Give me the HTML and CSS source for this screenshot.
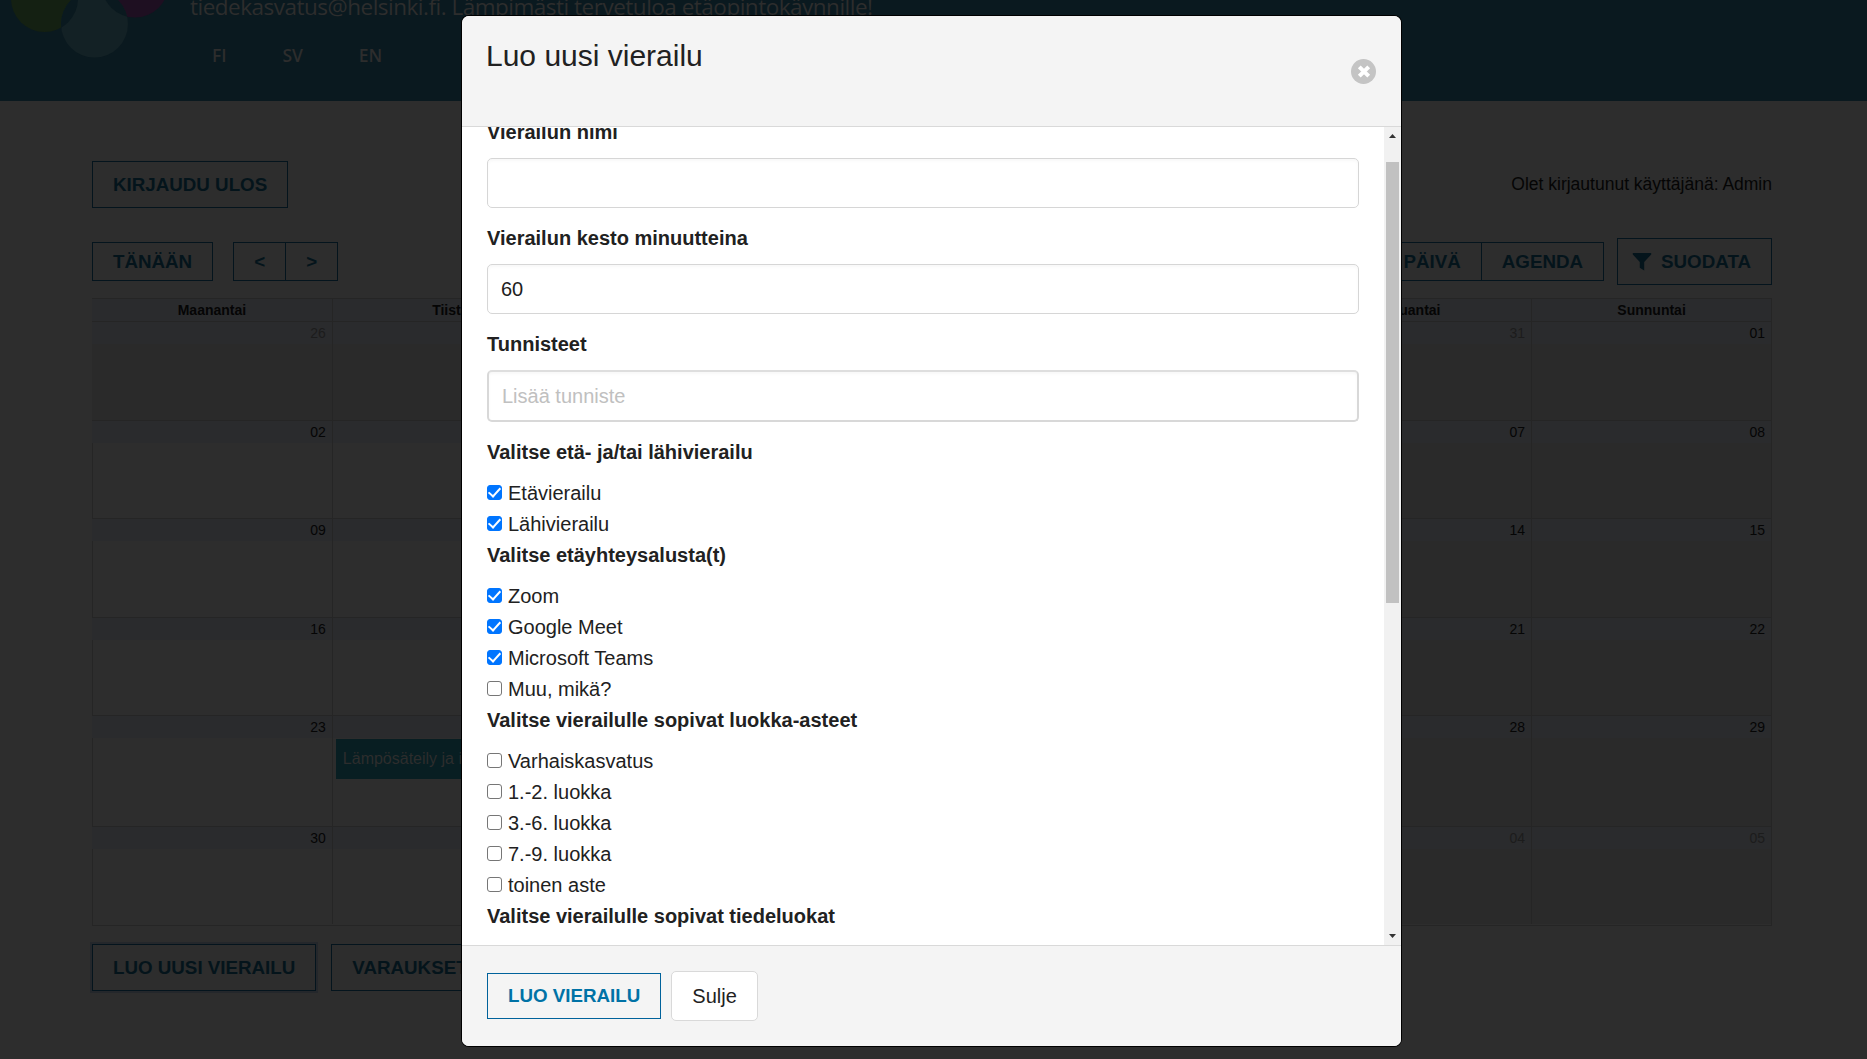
FILE: index.html
```
<!DOCTYPE html>
<html lang="fi">
<head>
<meta charset="utf-8">
<title>Luo uusi vierailu</title>
<link rel="stylesheet" href="styles.css">
</head>
<body>
<header class="banner">
  <svg class="logo" width="180" height="60" viewBox="0 0 180 60">
    <circle class="dot-green" cx="44.5" cy="-1.5" r="33.5"/>
    <circle class="dot-pink" cx="135" cy="-16" r="33.5"/>
    <circle class="dot-grey" cx="94.5" cy="24" r="33.5"/>
    <clipPath id="grey"><circle cx="94.5" cy="24" r="33.5"/></clipPath>
    <g clip-path="url(#grey)"><circle class="dot-cut" cx="44.5" cy="-1.5" r="33.5"/><circle class="dot-cut" cx="135" cy="-16" r="33.5"/></g>
  </svg>
  <div class="banner-text">
    <p class="lead">tiedekasvatus@helsinki.fi. Lämpimästi tervetuloa etäopintokäynnille!</p>
    <nav class="langs"><a>FI</a><a>SV</a><a>EN</a></nav>
  </div>
</header>
<main class="page">
  <div class="bar user-bar"><button class="btn">KIRJAUDU ULOS</button><span class="user">Olet kirjautunut käyttäjänä: Admin</span></div>
  <div class="bar tools">
    <div class="group today"><button class="btn short">TÄNÄÄN</button></div>
    <div class="group"><button class="btn short">&lt;</button><button class="btn short">&gt;</button></div>
    <div class="group views"><button class="btn short">PÄIVÄ</button><button class="btn short">AGENDA</button></div>
    <button class="btn filter"><svg width="20" height="20" viewBox="0 0 20 20"><path d="M.8 1h18.4v1.6L12.2 10v8.6L7.8 15.700V10L.8 2.600z"/></svg>SUODATA</button>
  </div>
  <div class="calendar">
    <div class="heads"><b>Maanantai</b><b>Tiistai</b><b>Keskiviikko</b><b>Torstai</b><b>Perjantai</b><b>Lauantai</b><b>Sunnuntai</b></div>
    <div class="week past"><div class="off">26</div><div class="off">27</div><div class="off">28</div><div class="off">29</div><div class="off">30</div><div class="off">31</div><div>01</div></div>
    <div class="week"><div>02</div><div>03</div><div>04</div><div>05</div><div>06</div><div>07</div><div>08</div></div>
    <div class="week"><div>09</div><div>10</div><div>11</div><div>12</div><div>13</div><div>14</div><div>15</div></div>
    <div class="week"><div>16</div><div>17</div><div>18</div><div>19</div><div>20</div><div>21</div><div>22</div></div>
    <div class="week tall"><div>23</div><div>24<span class="event">Lämpösäteily ja ilmasto</span></div><div>25</div><div>26</div><div>27</div><div>28</div><div>29</div></div>
    <div class="week"><div>30</div><div class="off">31</div><div class="off">01</div><div class="off">02</div><div class="off">03</div><div class="off">04</div><div class="off">05</div></div>
  </div>
  <div class="bar bottom"><button class="btn focus">LUO UUSI VIERAILU</button><button class="btn">VARAUKSET</button></div>
</main>
<section class="modal" role="dialog">
  <header class="modal-head">
    <h1>Luo uusi vierailu</h1>
    <svg class="close" width="25" height="25" viewBox="0 0 25 25"><circle cx="12.500" cy="12.500" r="12.500"/><path d="M8.300 7.800l9.400 9.400M17.700 7.800l-9.400 9.400"/></svg>
  </header>
  <div class="modal-body">
    <form class="form">
      <label class="title first">Vierailun nimi</label>
      <div class="input"></div>
      <label class="title">Vierailun kesto minuutteina</label>
      <div class="input">60</div>
      <label class="title">Tunnisteet</label>
      <div class="input tags">Lisää tunniste</div>
      <label class="title">Valitse etä- ja/tai lähivierailu</label>
      <label class="check on"><i></i>Etävierailu</label>
      <label class="check on"><i></i>Lähivierailu</label>
      <label class="title tight">Valitse etäyhteysalusta(t)</label>
      <label class="check on"><i></i>Zoom</label>
      <label class="check on"><i></i>Google Meet</label>
      <label class="check on"><i></i>Microsoft Teams</label>
      <label class="check"><i></i>Muu, mikä?</label>
      <label class="title tight">Valitse vierailulle sopivat luokka-asteet</label>
      <label class="check"><i></i>Varhaiskasvatus</label>
      <label class="check"><i></i>1.-2. luokka</label>
      <label class="check"><i></i>3.-6. luokka</label>
      <label class="check"><i></i>7.-9. luokka</label>
      <label class="check"><i></i>toinen aste</label>
      <label class="title tight">Valitse vierailulle sopivat tiedeluokat</label>
    </form>
    <div class="scroll">
      <svg width="17" height="17"><path d="M5 11h7L8.500 7z"/></svg>
      <span class="thumb"></span>
      <svg width="17" height="17"><path d="M5 6h7L8.500 10z"/></svg>
    </div>
  </div>
  <footer class="modal-foot"><button class="btn primary">LUO VIERAILU</button><button class="plain">Sulje</button></footer>
</section>
</body>
</html>
```
FILE: styles.css
```
* { box-sizing: border-box; }
body { margin: 0; height: 1059px; overflow: hidden; background: #2d2d2d; font: 20px/31px "Liberation Sans", Arial, sans-serif; color: #050505; position: relative; }
button { font: inherit; margin: 0; background: none; }

.banner { height: 101px; background: #0a191f; display: flex; overflow: hidden; }
.logo { flex: none; display: block; }
.dot-green { fill: #142012; }
.dot-pink { fill: #1e0f21; }
.dot-grey { fill: #132125; }
.dot-cut { fill: #0a191f; }
.banner-text { padding-left: 10px; font-family: "Open Sans", "Noto Sans", sans-serif; color: #2d2d2d; white-space: nowrap; }
.lead { margin: -10px 0 0; font-size: 22.5px; line-height: 34px; letter-spacing: -.5px; }
.langs { display: flex; gap: 56px; padding: 16px 0 0 22px; font-size: 17.5px; font-weight: 600; line-height: 31px; letter-spacing: -.1px; }

.page { padding: 60px 95px 0 92px; }
.bar { display: flex; align-items: center; }
.user-bar { justify-content: space-between; height: 47px; }
.user { font-size: 17.5px; }
.btn { height: 47px; padding: 0 20px; border: 1px solid #04141d; color: #04141b; font-size: 18.75px; font-weight: bold; line-height: 44px; white-space: nowrap; }
.short { height: 39px; line-height: 37px; }
.short + .short { margin-left: -1px; }
.tools { margin-top: 30px; height: 47px; }
.group { display: flex; }
.today { margin-right: 20px; }
.views { margin-left: auto; margin-right: 13px; }
.filter { display: flex; align-items: center; gap: 9px; padding-left: 14px; }
.filter svg { fill: #04141b; }

.calendar { margin-top: 13px; width: 1680px; height: 628px; border: 1px solid #252525; font-size: 14px; line-height: 22px; }
.heads, .week { display: grid; grid-template-columns: repeat(7, 1fr); margin-left: -1px; }
.heads { height: 22px; text-align: center; background: #2a2b2d; }
.heads b + b, .week div + div { border-left: 1px solid #252525; }
.week { height: 98.6px; border-top: 1px solid #252525; background: linear-gradient(#2a2b2d 22px, transparent 22px); }
.tall { height: 110.4px; }
.week div { text-align: right; padding-right: 6px; min-width: 0; }
.week div:nth-child(n+3) { background: linear-gradient(transparent 22px, #2a2a2a 22px); }
.past div { background: linear-gradient(transparent 22px, #2a2a2a 22px); }
.week .off { color: #1c1c1c; }
.event { display: block; margin: 1px 0 0 3px; height: 40px; padding: 0 7px; background: #081e22; color: #2d2d2d; font-size: 16px; line-height: 39px; text-align: left; white-space: nowrap; overflow: hidden; }
.bottom { margin-top: 18px; gap: 15px; }
.focus { box-shadow: 0 0 0 2px #24272b; }

.modal { position: absolute; left: 462px; top: 16px; width: 939px; height: 1030px; display: flex; flex-direction: column; background: #fff; border-radius: 7px; overflow: hidden; color: #212121; box-shadow: 0 0 0 1px #000; }
.modal-head { height: 111px; padding: 20px 25px 20px 24px; background: #f4f4f4; border-bottom: 1px solid #d9d9d9; display: flex; justify-content: space-between; }
h1 { margin: 0; font-size: 30px; line-height: 39px; font-weight: normal; }
.close { margin-top: 23px; }
.close circle { fill: #c4c4c4; }
.close path { stroke: #fff; stroke-width: 4; fill: none; }
.modal-body { height: 818px; display: flex; overflow: hidden; }
.form { flex: 1; padding: 0 25px; }
.title { display: block; font-weight: bold; margin: 15px 0 10px; height: 31px; white-space: nowrap; }
.first { margin: -10px 0 10px; }
.tight { margin-top: 0; }
.input { height: 50px; padding: 0 13px; border: 1px solid #d6d6d6; border-radius: 5px; line-height: 48px; box-shadow: inset 0 2px 3px #00000008; }
.tags { height: 52px; border: 2px solid #d8d8d8; border-top-color: #dedede; color: #c0c0c0; }
.check { display: flex; height: 31px; gap: 6px; }
.check i { width: 15px; height: 15px; margin-top: 7px; border: 1px solid #767676; border-radius: 3px; }
.on i { background: #0075ff; border-color: #0075ff; display: grid; place-items: center; }
.on i::after { content: ""; width: 5px; height: 10px; margin-top: -3px; border: solid #fff; border-width: 0 2px 2px 0; transform: rotate(42deg); }
.scroll { width: 17px; height: 818px; background: #f1f1f1; display: flex; flex-direction: column; }
.scroll svg { flex: none; fill: #333; }
.thumb { height: 441px; margin: 18px 2px auto; background: #c1c1c1; }
.modal-foot { flex: 1; background: #f4f4f4; border-top: 1px solid #d9d9d9; padding: 25px; display: flex; align-items: flex-start; gap: 10px; }
.primary { height: 46px; margin-top: 2px; border-color: #00629b; color: #0072a6; line-height: 42px; }
.plain { height: 50px; padding: 0 20px; border: 1px solid #d9d9d9; border-radius: 5px; background: #fff; color: #212121; }
```
